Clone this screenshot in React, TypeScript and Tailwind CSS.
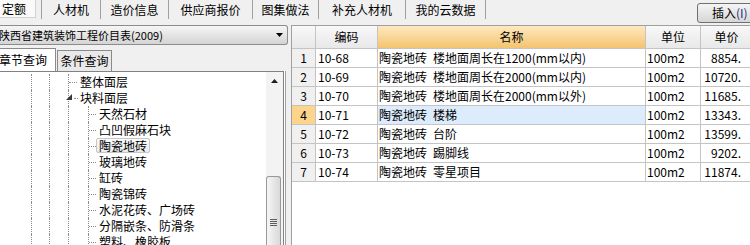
import React from "react";

const topTabs = [
  { label: "人材机", cls: "w-[59px]" },
  { label: "造价信息", cls: "w-[68px]" },
  { label: "供应商报价", cls: "w-[84px]" },
  { label: "图集做法", cls: "w-[66px]" },
  { label: "补充人材机", cls: "w-[87px]" },
  { label: "我的云数据", cls: "w-[80px]" },
];

const children = [
  "天然石材",
  "凸凹假麻石块",
  "陶瓷地砖",
  "玻璃地砖",
  "缸砖",
  "陶瓷锦砖",
  "水泥花砖、广场砖",
  "分隔嵌条、防滑条",
  "塑料、橡胶板",
];

const rows = [
  { n: "1", code: "10-68", name: "陶瓷地砖\u2002楼地面周长在1200(mm以内)", price: "8854." },
  { n: "2", code: "10-69", name: "陶瓷地砖\u2002楼地面周长在2000(mm以内)", price: "10720." },
  { n: "3", code: "10-70", name: "陶瓷地砖\u2002楼地面周长在2000(mm以外)", price: "11685." },
  { n: "4", code: "10-71", name: "陶瓷地砖\u2002楼梯", price: "13343.", sel: true },
  { n: "5", code: "10-72", name: "陶瓷地砖\u2002台阶", price: "13599." },
  { n: "6", code: "10-73", name: "陶瓷地砖\u2002踢脚线", price: "9202." },
  { n: "7", code: "10-74", name: "陶瓷地砖\u2002零星项目", price: "11874." },
];

function Guides() {
  return (
    <>
      <div className="w-[31px] shrink-0" />
      <div className="w-[18px] shrink-0 border-l border-dotted border-[#8c8c8c]" />
      <div className="w-[19px] shrink-0 border-l border-dotted border-[#8c8c8c]" />
    </>
  );
}

function Level2({ label, expanded }: { label: string; expanded?: boolean }) {
  return (
    <div className="flex h-[16px]">
      <Guides />
      <div className="relative flex w-[12px] shrink-0 items-center border-l border-dotted border-[#8c8c8c]">
        {expanded ? (
          <>
            <svg className="absolute left-[-3px] top-[4px]" width="6" height="6" viewBox="0 0 6 6">
              <path d="M6 0V6H0Z" fill="#3a3a3a" />
            </svg>
            <div className="ml-[5px] w-[4px] border-t border-dotted border-[#8c8c8c]" />
          </>
        ) : (
          <div className="w-[8px] border-t border-dotted border-[#8c8c8c]" />
        )}
      </div>
      <span className="flex items-center whitespace-nowrap text-[12px]">{label}</span>
    </div>
  );
}

function Level3({ label, selected }: { label: string; selected?: boolean }) {
  return (
    <div className="flex h-[16px]">
      <Guides />
      <div className="w-[20px] shrink-0 border-l border-dotted border-[#8c8c8c]" />
      <div className="flex w-[8px] shrink-0 items-center border-l border-dotted border-[#8c8c8c]">
        <div className="w-[7px] border-t border-dotted border-[#8c8c8c]" />
      </div>
      <span
        className={
          selected
            ? "flex h-[15px] items-center whitespace-nowrap rounded-[2px] border border-[#c6c6c6] bg-linear-to-b from-[#fbfbfb] to-[#ebebeb] px-[2px] text-[12px]"
            : "flex h-[15px] items-center whitespace-nowrap border border-transparent px-[2px] text-[12px]"
        }
      >
        {label}
      </span>
    </div>
  );
}

export default function App() {
  return (
    <div className="h-[245px] w-[750px] overflow-hidden bg-[#f0f0f0] font-['Noto_Sans_CJK_SC','Noto_Sans',sans-serif] text-[12px] leading-none text-black">
      {/* top tab strip */}
      <div className="flex h-[25px] items-start">
        <div className="flex h-[19px] w-[42px] shrink-0 border-r border-[#a0a0a0]">
          <div className="flex h-[18px] w-[36px] items-center border-r border-b border-[#d2d2d2] bg-[#fafafa] pl-[2px]">
            定额
          </div>
        </div>
        {topTabs.map((t) => (
          <div
            key={t.label}
            className={`flex h-[19px] shrink-0 items-center justify-center border-r border-[#a0a0a0] ${t.cls}`}
          >
            {t.label}
          </div>
        ))}
        <div className="flex-1" />
        <div className="-mr-[9px] mt-[3px] flex h-[20px] w-[62px] shrink-0 items-center rounded-[3px] border border-[#707070] bg-linear-to-b from-[#f5f5f5] to-[#d6d6d6] pl-[14px] whitespace-nowrap">
          插入<span className="text-[#1c2f80]">(I)</span>
        </div>
      </div>

      {/* main */}
      <div className="flex h-[220px]">
        {/* left panel */}
        <div className="flex w-[291px] shrink-0 flex-col">
          <div className="flex h-[20px] w-[288px] items-center overflow-hidden rounded-r-[3px] border border-l-0 border-[#8c8c8c] bg-linear-to-b from-[#f6f6f6] to-[#d4d4d4]">
            <span className="ml-[-1px] whitespace-nowrap text-[11px]">陕西省建筑装饰工程价目表(2009)</span>
            <svg className="ml-auto mr-[4px]" width="7" height="4" viewBox="0 0 7 4">
              <path d="M0 0H7L3.5 4Z" fill="#000" />
            </svg>
          </div>
          <div className="mt-[3px] flex h-[23px]">
            <div className="flex h-[23px] w-[56px] items-center border-t border-r border-[#8a8a8a] bg-white">
              <span className="ml-[-1px]">章节查询</span>
            </div>
            <div className="ml-[1px] mt-[2px] flex h-[21px] w-[55px] items-center justify-center border border-b-0 border-[#8a8a8a] bg-[#e9e9e9]">
              条件查询
            </div>
          </div>
          <div className="flex min-h-0 flex-1">
            <div className="flex w-[284px] shrink-0 border-t border-r border-[#828282] bg-white">
              <div className="w-[266px] shrink-0 overflow-hidden pt-[2px]">
                <Level2 label="整体面层" />
                <Level2 label="块料面层" expanded />
                {children.map((c) => (
                  <Level3 key={c} label={c} selected={c === "陶瓷地砖"} />
                ))}
              </div>
              <div className="flex w-[17px] shrink-0 flex-col bg-[#f3f3f3]">
                <div className="flex h-[17px] items-center justify-center">
                  <svg width="7" height="4" viewBox="0 0 7 4">
                    <path d="M3.5 0L7 4H0Z" fill="#1e1e1e" />
                  </svg>
                </div>
                <div className="mt-[87px] flex flex-1 flex-col rounded-t-[3px] border border-b-0 border-[#989898] bg-linear-to-r from-[#f6f6f6] to-[#d9d9d9] w-[15px]">
                  <div className="ml-[3px] mt-[42px] flex w-[7px] flex-col gap-[1px]">
                    <div className="h-[1px] bg-[#5c5c5c]" />
                    <div className="h-[1px] bg-[#5c5c5c]" />
                    <div className="h-[1px] bg-[#5c5c5c]" />
                    <div className="h-[1px] bg-[#5c5c5c]" />
                  </div>
                </div>
              </div>
            </div>
            <div className="w-[1px] shrink-0 bg-white" />
            <div className="w-[1px] shrink-0 bg-[#a0a0a0]" />
          </div>
        </div>

        {/* right panel: grid */}
        <div className="min-w-0 flex-1 overflow-hidden border-t border-l border-[#a0a0a0] bg-white">
          <div className="flex h-[23px] border-b border-[#c4c4c4] text-[12px]">
            <div className="w-[24px] shrink-0 border-r border-[#c4c4c4] bg-linear-to-b from-[#f8f8f8] to-[#e8e8e8]" />
            <div className="flex w-[62px] shrink-0 items-center justify-center border-r border-[#c4c4c4] bg-linear-to-b from-[#f8f8f8] to-[#e8e8e8]">
              编码
            </div>
            <div className="flex w-[268px] shrink-0 items-center justify-center border-r border-[#c4c4c4] bg-linear-to-b from-[#fde9bf] to-[#f4c36d]">
              名称
            </div>
            <div className="flex w-[55px] shrink-0 items-center justify-center border-r border-[#c4c4c4] bg-linear-to-b from-[#f8f8f8] to-[#e8e8e8]">
              单位
            </div>
            <div className="flex w-[52px] shrink-0 items-center justify-center border-r border-[#c4c4c4] bg-linear-to-b from-[#f8f8f8] to-[#e8e8e8]">
              单价
            </div>
          </div>
          {rows.map((r) => (
            <div key={r.n} className="flex h-[19px] border-b border-[#c4c4c4]">
              <div
                className={
                  r.sel
                    ? "flex w-[24px] shrink-0 items-center justify-center border-r border-[#c4c4c4] bg-[#fcd48c]"
                    : "flex w-[24px] shrink-0 items-center justify-center border-r border-[#c4c4c4] bg-[#f0f0f0]"
                }
              >
                {r.n}
              </div>
              <div className="flex w-[62px] shrink-0 items-center border-r border-[#c4c4c4] pl-[2px]">{r.code}</div>
              <div
                className={
                  r.sel
                    ? "flex w-[268px] shrink-0 items-center whitespace-pre border-r border-[#c4c4c4] bg-[#dcecfc] pl-[1px]"
                    : "flex w-[268px] shrink-0 items-center whitespace-pre border-r border-[#c4c4c4] pl-[1px]"
                }
              >
                {r.name}
              </div>
              <div className="flex w-[55px] shrink-0 items-center border-r border-[#c4c4c4] pl-[1px]">100m2</div>
              <div className="flex w-[52px] shrink-0 items-center justify-end border-r border-[#c4c4c4] pr-[11px]">
                {r.price}
              </div>
            </div>
          ))}
        </div>
      </div>
    </div>
  );
}
